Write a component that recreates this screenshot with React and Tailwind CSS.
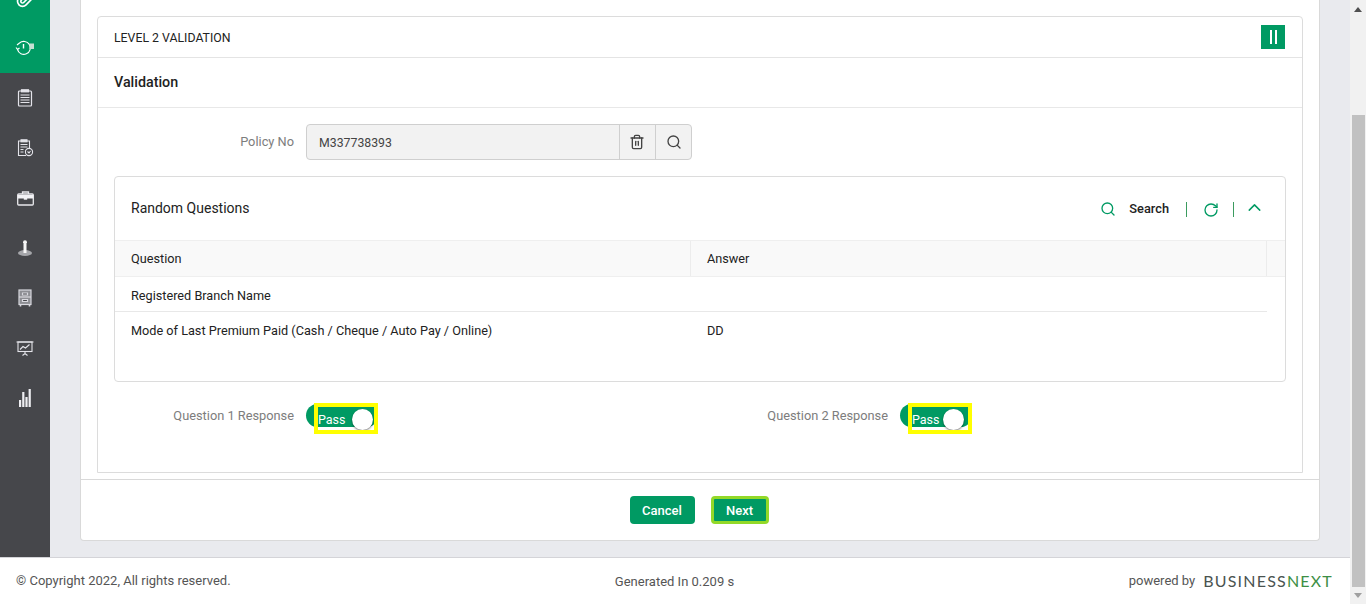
import React from "react";
import { Search, Trash2, RotateCw, ChevronUp, Paperclip } from "lucide-react";

const font = "font-['Roboto','Noto_Sans',sans-serif]";

function HistoryIcon() {
  return (
    <svg width="20" height="18" viewBox="0 0 20 18" fill="none" stroke="white" strokeWidth="1.1">
      <path d="M2.5 10.5a6.5 6.5 0 1 0 2-6.5L2 6" />
      <path d="M1 8.5l1.5 2 2-1.5" />
      <path d="M8.5 5v4.5" strokeWidth="1.4" />
      <rect x="14.5" y="4.5" width="4.5" height="5.5" fill="#c5e0d3" stroke="none" />
    </svg>
  );
}

function ClipboardIcon() {
  return (
    <svg width="16" height="18" viewBox="0 0 16 18" fill="none" stroke="#e4e4ea" strokeWidth="1.2">
      <rect x="1.5" y="2" width="13" height="15" rx="1" />
      <rect x="4.5" y="0.8" width="7" height="2" fill="#e4e4ea" />
      <path d="M3.5 6h9M3.5 8.5h9M3.5 11h9M3.5 13.5h9" />
    </svg>
  );
}

function TaskIcon() {
  return (
    <svg width="17" height="18" viewBox="0 0 17 18" fill="none" stroke="#e4e4ea" strokeWidth="1.1">
      <path d="M9 16.5H1.5V2h11v7" />
      <rect x="4" y="0.8" width="6" height="2" fill="#e4e4ea" />
      <path d="M3.5 5.5h7M3.5 8h7M3.5 10.5h3M3.5 13h3" />
      <circle cx="12" cy="13" r="3.6" />
      <path d="M10.5 12.5l1.5 1.5 1.5-2" />
    </svg>
  );
}

function BriefcaseIcon() {
  return (
    <svg width="17" height="15" viewBox="0 0 17 15" fill="none" stroke="#e8e8ec" strokeWidth="1.3">
      <path d="M5.5 3V1h6v2" />
      <rect x="0.7" y="3" width="15.6" height="11" rx="1" />
      <path d="M0.7 4h15.6v3.5H0.7z" fill="#f2f2f5" stroke="none" />
      <rect x="6.8" y="6.5" width="3.4" height="2.2" fill="#f2f2f5" stroke="none" />
    </svg>
  );
}

function JoystickIcon() {
  return (
    <svg width="16" height="18" viewBox="0 0 16 18" fill="none">
      <ellipse cx="8" cy="14" rx="7" ry="3" fill="#a5a6aa" />
      <path d="M6.5 5h3v9h-3z" fill="#f6f6f6" />
      <circle cx="8" cy="3.2" r="2" fill="#f6f6f6" />
    </svg>
  );
}

function CabinetIcon() {
  return (
    <svg width="14" height="18" viewBox="0 0 14 18" fill="none" stroke="#d8d8de" strokeWidth="1.2">
      <rect x="1" y="1" width="12" height="14.5" fill="#8d8e93" />
      <path d="M1 8h12" />
      <path d="M4.5 4h5v2h-5zM4.5 10.5h5v2h-5z" fill="#46474b" />
      <path d="M2.5 16v1.5M11.5 16v1.5" strokeWidth="1.6" />
    </svg>
  );
}

function PresentationIcon() {
  return (
    <svg width="18" height="15" viewBox="0 0 18 15" fill="none" stroke="#e4e4ea" strokeWidth="1.1">
      <path d="M0.5 1h17" />
      <rect x="2" y="1" width="14" height="9.5" />
      <path d="M4 8.5l3-3 2.5 1.5 4-3.5" />
      <path d="M9 10.5v2M6.5 14.5L9 12.5l2.5 2" />
    </svg>
  );
}

function BarsIcon() {
  return (
    <svg width="12" height="18" viewBox="0 0 12 18" fill="#eeeef2">
      <rect x="0" y="11" width="2.2" height="7" />
      <rect x="3.2" y="3" width="2.2" height="15" />
      <rect x="6.4" y="8" width="2.2" height="10" />
      <rect x="9.6" y="0" width="2.2" height="18" />
    </svg>
  );
}

function SideItem({ active, children }) {
  return (
    <div className={`h-[50px] flex items-center justify-center ${active ? "bg-[#009a63]" : ""}`}>
      {children}
    </div>
  );
}

function Sidebar() {
  return (
    <div className="w-[50px] shrink-0 bg-[#46474b] overflow-hidden">
      {/* page is scrolled, first item is cut by the window top */}
      <div className="-mt-[27px]">
        <SideItem active>
          <Paperclip size={20} color="white" strokeWidth={2} />
        </SideItem>
        <SideItem active>
          <HistoryIcon />
        </SideItem>
        <SideItem><ClipboardIcon /></SideItem>
        <SideItem><TaskIcon /></SideItem>
        <SideItem><BriefcaseIcon /></SideItem>
        <SideItem><JoystickIcon /></SideItem>
        <SideItem><CabinetIcon /></SideItem>
        <SideItem><PresentationIcon /></SideItem>
        <SideItem><BarsIcon /></SideItem>
      </div>
    </div>
  );
}

function Toggle({ knobClass }) {
  return (
    <div className="relative h-[23px] w-[72px] rounded-full bg-[#009a63]">
      <span className={`absolute top-[5px] h-[21px] w-[21px] rounded-full bg-white shadow-[0_1px_2px_rgba(0,0,0,0.5)] ${knobClass}`} />
      <span className="absolute left-3 top-[7px] text-[12.5px] leading-[18px] text-white">Pass</span>
      <div className="absolute left-2 -top-px h-[31px] w-[64px] border-4 border-[#ffff00]" />
    </div>
  );
}

export default function App() {
  return (
    <div className={`h-[604px] flex overflow-hidden bg-white text-[#222] ${font}`}>
      <div className="w-[1350px] flex flex-col">
        <div className="h-[557px] flex bg-[#e9eaee] overflow-hidden">
          <Sidebar />
          <div className="flex-1 pl-[30px]">
            <div className="w-[1240px] h-[541px] bg-white border-x border-b border-[#d9d9d9] rounded-b flex flex-col">
              <div className="h-[479px] px-4 pt-4">
                <div className="h-[457px] border border-[#dcdcdc] rounded-t">
                  <div className="h-[41px] border-b border-[#e4e4e4] flex items-center justify-between pl-4 pr-[17px]">
                    <span className="text-[12.3px] text-[#222] pt-[2px]">LEVEL 2 VALIDATION</span>
                    <button className="w-6 h-6 bg-[#009a63] flex items-center justify-center gap-[3px]">
                      <span className="w-[2px] h-[14px] bg-white" />
                      <span className="w-[2px] h-[14px] bg-white" />
                    </button>
                  </div>
                  <div className="h-[50px] border-b border-[#e8e8e8] flex items-center pl-4">
                    <span className="text-[14.3px] font-medium text-[#222]">Validation</span>
                  </div>

                  <div className="flex items-center mt-4 h-9">
                    <label className="w-[196px] text-right text-[12.8px] text-[#7d7d7d]">Policy No</label>
                    <div className="ml-3 w-[386px] h-9 flex border border-[#cfcfcf] rounded bg-[#f2f2f2] text-[12.3px]">
                      <div className="flex-1 flex items-center pl-3 pt-[2px] text-[#444]">M337738393</div>
                      <div className="w-9 flex items-center justify-center border-l border-[#cfcfcf] pr-px">
                        <Trash2 size={16} color="#444" />
                      </div>
                      <div className="w-9 flex items-center justify-center border-l border-[#cfcfcf]">
                        <Search size={16} color="#444" />
                      </div>
                    </div>
                  </div>

                  <div className="mx-4 mt-4 h-[206px] border border-[#dcdcdc] rounded">
                    <div className="h-[63px] flex items-center justify-between pl-4 pr-5">
                      <span className="text-[14px] text-[#222]">Random Questions</span>
                      <div className="flex items-center text-[#009a63]">
                        <Search size={16} />
                        <span className="ml-[13px] text-[12.8px] text-[#222] font-medium">Search</span>
                        <span className="ml-[17px] w-px h-[15px] bg-[#3b9b5f] translate-y-px" />
                        <RotateCw size={16} className="ml-4 translate-y-px" />
                        <span className="ml-[14px] w-px h-[15px] bg-[#3b9b5f] translate-y-px" />
                        <ChevronUp size={21} strokeWidth={1.7} className="ml-[10px] -translate-y-px" />
                      </div>
                    </div>
                    <div className="flex h-[37px] bg-[#f9f9f9] border-y border-[#efefef] text-[12.7px]">
                      <div className="w-[576px] flex items-center pl-4 border-r border-[#ececec]">Question</div>
                      <div className="w-[576px] flex items-center pl-4 border-r border-[#ececec]">Answer</div>
                    </div>
                    <div className="w-[1152px] text-[12.7px]">
                      <div className="h-[35px] border-b border-[#e8e8e8] flex items-center pl-4 pt-[3px]">Registered Branch Name</div>
                      <div className="h-[36px] flex pt-[2px]">
                        <div className="w-[576px] flex items-center pl-4">Mode of Last Premium Paid (Cash / Cheque / Auto Pay / Online)</div>
                        <div className="flex items-center pl-4">DD</div>
                      </div>
                    </div>
                  </div>

                  <div className="flex mt-[22px] h-[23px] items-center text-[12.8px] text-[#7d7d7d]">
                    <label className="w-[196px] text-right">Question 1 Response</label>
                    <div className="ml-3"><Toggle knobClass="left-[46px]" /></div>
                    <label className="w-[510px] text-right">Question 2 Response</label>
                    <div className="ml-3"><Toggle knobClass="left-[43px]" /></div>
                  </div>
                </div>
              </div>
              <div className="flex-1 border-t border-[#d9d9d9] flex items-center justify-center gap-4 pr-[2px]">
                <button className="w-[65px] h-7 rounded bg-[#009a63] text-white text-[13px] font-medium pt-px">Cancel</button>
                <button className="w-[58px] h-7 rounded bg-[#009a63] text-white text-[13px] font-medium border-[3px] border-[#93d928] pt-px">Next</button>
              </div>
            </div>
          </div>
        </div>
        <div className="flex-1 border-t border-[#d4d4d8] bg-white flex items-center justify-between pl-4 pr-[17px] text-[13px] text-[#555]">
          <span className="w-[400px]">© Copyright 2022, All rights reserved.</span>
          <span className="pt-px">Generated In 0.209 s</span>
          <span className="w-[400px] flex items-center justify-end gap-2">
            powered by
            <span className="font-['Lato'] text-[16px] tracking-[1.2px] text-[#4a5350]">
              BUSINESS<span className="text-[#3d8f45]">NEXT</span>
            </span>
          </span>
        </div>
      </div>

      {/* scrollbar */}
      <div className="w-4 shrink-0 bg-[#f1f1f1] flex flex-col items-center">
        <div className="h-[115px] pt-[7px] w-full flex justify-center">
          <div className="w-0 h-0 border-x-4 border-x-transparent border-b-[5px] border-b-[#505050]" />
        </div>
        <div className="w-[13px] h-[472px] bg-[#c1c1c1]" />
        <div className="mt-[6px] w-0 h-0 border-x-4 border-x-transparent border-t-[5px] border-t-[#a0a0a0]" />
      </div>
    </div>
  );
}
